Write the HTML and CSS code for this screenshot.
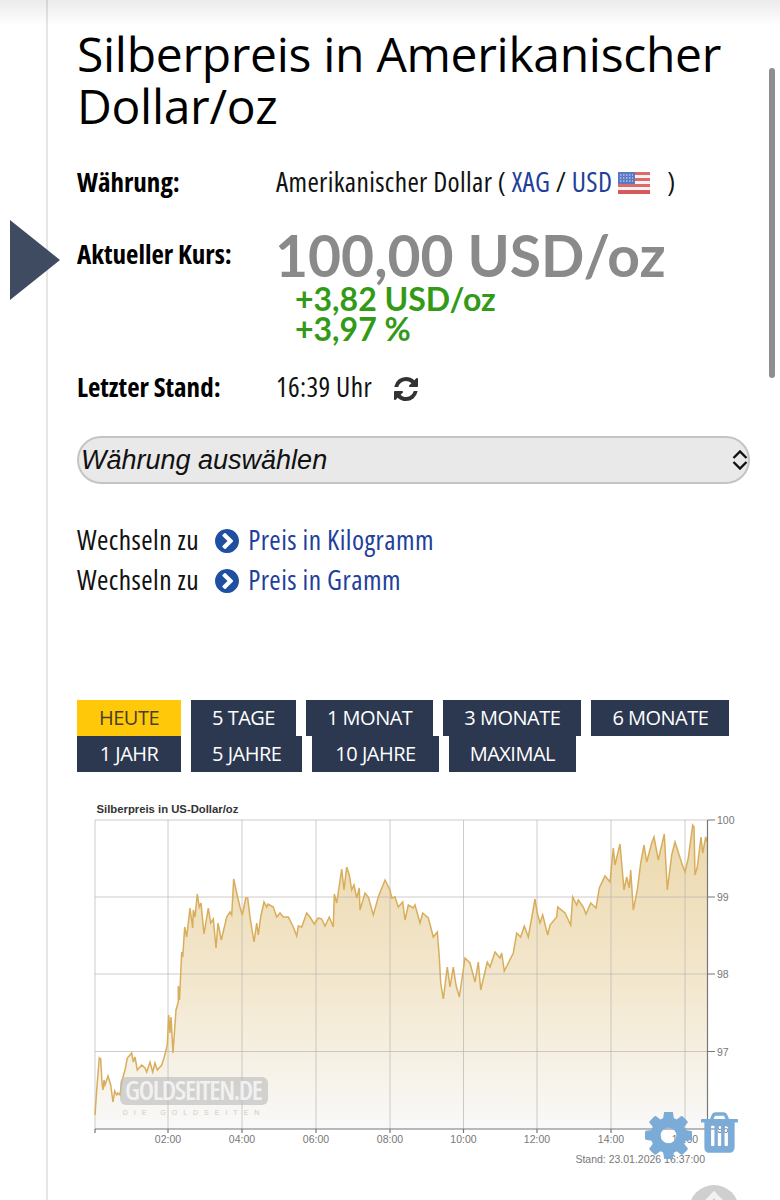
FILE: index.html
```html
<!DOCTYPE html>
<html lang="de">
  <head>
    <meta charset="utf-8">
    <title>Silberpreis in Amerikanischer Dollar/oz</title>
    <link rel="stylesheet" href="styles.css">
  </head>
  <body>
    <div class="top-shade"></div>
    <div class="scrollbar"></div>
    <div class="marker"></div>

    <div class="page">
      <h1>Silberpreis in Amerikanischer Dollar/oz</h1>

      <div class="row row-currency">
        <div class="label">Währung:</div>
        <div class="value">
          Amerikanischer Dollar ( <a href="#">XAG</a> / <a href="#">USD</a>
          <svg class="flag" viewBox="0 0 32 22">
            <rect width="32" height="22" rx="2" fill="#f4f1f1"/>
            <rect y="0" width="32" height="3" fill="#dd6a6a"/>
            <rect y="6" width="32" height="3" fill="#dd6a6a"/>
            <rect y="12" width="32" height="3" fill="#dd6a6a"/>
            <rect y="18" width="32" height="4" fill="#d65a5a"/>
            <rect width="17" height="12" fill="#5a78c4"/>
            <path d="M2 3h13M2 6h13M2 9h13" stroke="#dfe6f7" stroke-width="1.2" stroke-dasharray="1.5 1.5"/>
          </svg>
          <span class="paren">)</span>
        </div>
      </div>

      <div class="row row-price">
        <div class="label">Aktueller Kurs:</div>
        <div class="price-box">
          <div class="price">100,00 USD/oz</div>
          <div class="change">+3,82 USD/oz<br>+3,97 %</div>
        </div>
      </div>

      <div class="row row-time">
        <div class="label">Letzter Stand:</div>
        <div class="value">
          16:39 Uhr
          <svg class="refresh" viewBox="0 0 1536 1536"><path d="M1511 928q0 5-1 7-64 268-268 434.500t-478 166.500q-146 0-282.500-55t-243.500-157l-129 129q-19 19-45 19t-45-19-19-45v-448q0-26 19-45t45-19h448q26 0 45 19t19 45-19 45l-137 137q71 66 161 102t187 36q134 0 250-65t186-179q11-17 53-117 8-23 30-23h192q13 0 22.500 9.500t9.500 22.500zm25-800v448q0 26-19 45t-45 19h-448q-26 0-45-19t-19-45 19-45l138-138q-148-137-349-137-134 0-250 65t-186 179q-11 17-53 117-8 23-30 23h-199q-13 0-22.500-9.500t-9.500-22.500v-7q65-268 270-434.500t480-166.500q146 0 284 55.500t245 156.500l130-129q19-19 45-19t45 19 19 45z"/></svg>
        </div>
      </div>

      <div class="picker">
        <span>Währung auswählen</span>
        <svg class="picker-arrows" viewBox="0 0 16 20"><path d="M1.500 8L8 1.500 14.500 8M1.500 12L8 18.500 14.500 12"/></svg>
      </div>

      <div class="switch">
        <div class="switch-row">
          Wechseln zu
          <svg class="go" viewBox="0 32 1536 1536"><path d="M685 1299l454-454q19-19 19-45t-19-45L685 301q-19-19-45-19t-45 19L493 403q-19 19-19 45t19 45l307 307-307 307q-19 19-19 45t19 45l102 102q19 19 45 19t45-19zm851-499q0 209-103 385.500T1153 1465 768 1568t-385.500-103T103 1185 0 800t103-385.500T383 135 768 32t385.500 103T1433 415t103 385z"/></svg>
          <a href="#">Preis in Kilogramm</a>
        </div>
        <div class="switch-row">
          Wechseln zu
          <svg class="go" viewBox="0 32 1536 1536"><path d="M685 1299l454-454q19-19 19-45t-19-45L685 301q-19-19-45-19t-45 19L493 403q-19 19-19 45t19 45l307 307-307 307q-19 19-19 45t19 45l102 102q19 19 45 19t45-19zm851-499q0 209-103 385.500T1153 1465 768 1568t-385.500-103T103 1185 0 800t103-385.500T383 135 768 32t385.500 103T1433 415t103 385z"/></svg>
          <a href="#">Preis in Gramm</a>
        </div>
      </div>

      <div class="tabs">
        <a class="tab tab-active" href="#">HEUTE</a>
        <a class="tab" href="#">5 TAGE</a>
        <a class="tab" href="#">1 MONAT</a>
        <a class="tab" href="#">3 MONATE</a>
        <a class="tab" href="#">6 MONATE</a>
        <a class="tab" href="#">1 JAHR</a>
        <a class="tab" href="#">5 JAHRE</a>
        <a class="tab tab-wide" href="#">10 JAHRE</a>
        <a class="tab" href="#">MAXIMAL</a>
      </div>

      <div class="chart">
        <svg class="chart-svg" viewBox="77 795 673 375">
          <defs>
            <linearGradient id="area" x1="0" y1="0" x2="0" y2="1">
              <stop offset="0" stop-color="#ecd8ac"/>
              <stop offset="0.55" stop-color="#f3e8d0"/>
              <stop offset="1" stop-color="#f9f9f9"/>
            </linearGradient>
          </defs>
          <text class="chart-title" x="96.500" y="813">Silberpreis in US-Dollar/oz</text>

          <path class="area" d="M95 1129 L95 1115 96.700 1090 99.300 1058 100.700 1059 102 1083 103 1090 104 1080 105 1085 108 1076 110.700 1085 113 1102 114.700 1091 116.700 1095 118 1093 120 1095 121.700 1082 125 1070 127.300 1058 130 1055 131.700 1053 133.300 1062 135 1057 137.300 1070 141.700 1065 145 1068 146.700 1072 150 1062 152.700 1072 155 1063 157.300 1070 161.700 1065 164 1058 167.300 1045 168.700 1015 170 1033 171 1017 173 1053 176 1010 178.300 1002 178.300 986 179.500 1000 181.700 952 182.700 957 184.700 927 186.700 937 190 908 192.700 928 193.300 910 195 917 197.300 894 199.300 907 201 903 204 934 208.300 908 210.700 923 213.300 919 216 948 218 923 221.300 940 226.700 917 230 912 231.700 915 233.700 879 236.700 893 240 907 242.300 915 245.700 898 247.700 898 250 917 254 942 256.700 923 258.300 935 260.700 917 264 902 266.700 907 268 904 273.300 907 276.700 917 280 913 283.300 917 288.300 917 293.300 927 296.700 936 298.300 926 301.700 927 306.700 913 310 917 314.300 924 318.300 918 321.700 919 325 926 329.300 917 333.300 927 334.300 894 336.700 903 341.700 869 344 890 346.700 867 349.300 875 351.700 890 354 885 356.700 898 359.300 888 360 910 365 893 368.300 897 373.300 915 378.300 897 385 880 390 890 391.700 898 395 897 398.300 907 402.700 902 405 920 408.300 905 413.300 908 415 905 420 923 422.700 913 428.300 918 433.300 937 437.300 932 439.300 957 440.700 983 443.300 999 447.300 967 450 987 453.300 967 456 985 459.300 997 465 958 470 963 475 982 478.300 962 480.700 990 487.300 962 490 967 495 952 500 958 501.700 953 504.300 971 513.300 953 516.700 933 520.700 937 524.300 926 528.300 937 535 899 537.300 913 540 923 542.700 915 547.700 935 550 925 556.700 917 557.700 907 565 913 570.700 925 572.700 897 576.700 905 578.300 900 583.300 907 586 914 590.700 903 596 908 599.300 888 605 876 610 882 613.300 848 615 865 620 844 624 890 626.700 877 629.300 888 630.700 870 633.300 910 637.300 890 640.700 863 644 845 646.700 862 651.700 843 654 837 658.300 860 664.300 834 667.300 890 671.700 855 675 842 681.700 863 685 872 688.300 858 690.700 840 692.700 825 694 827 695 875 697.300 867 701 837 702.700 853 705.700 837 707.300 842 L707.300 1129 Z"/>

          <g class="grid">
            <path d="M95 820H707M95 897H707M95 974H707M95 1051.500H707"/>
            <path d="M95 820V1129M168 820V1129M242 820V1129M316 820V1129M390 820V1129M463.500 820V1129M537 820V1129M611 820V1129M685 820V1129"/>
          </g>

          <path class="line" d="M95 1115 96.700 1090 99.300 1058 100.700 1059 102 1083 103 1090 104 1080 105 1085 108 1076 110.700 1085 113 1102 114.700 1091 116.700 1095 118 1093 120 1095 121.700 1082 125 1070 127.300 1058 130 1055 131.700 1053 133.300 1062 135 1057 137.300 1070 141.700 1065 145 1068 146.700 1072 150 1062 152.700 1072 155 1063 157.300 1070 161.700 1065 164 1058 167.300 1045 168.700 1015 170 1033 171 1017 173 1053 176 1010 178.300 1002 178.300 986 179.500 1000 181.700 952 182.700 957 184.700 927 186.700 937 190 908 192.700 928 193.300 910 195 917 197.300 894 199.300 907 201 903 204 934 208.300 908 210.700 923 213.300 919 216 948 218 923 221.300 940 226.700 917 230 912 231.700 915 233.700 879 236.700 893 240 907 242.300 915 245.700 898 247.700 898 250 917 254 942 256.700 923 258.300 935 260.700 917 264 902 266.700 907 268 904 273.300 907 276.700 917 280 913 283.300 917 288.300 917 293.300 927 296.700 936 298.300 926 301.700 927 306.700 913 310 917 314.300 924 318.300 918 321.700 919 325 926 329.300 917 333.300 927 334.300 894 336.700 903 341.700 869 344 890 346.700 867 349.300 875 351.700 890 354 885 356.700 898 359.300 888 360 910 365 893 368.300 897 373.300 915 378.300 897 385 880 390 890 391.700 898 395 897 398.300 907 402.700 902 405 920 408.300 905 413.300 908 415 905 420 923 422.700 913 428.300 918 433.300 937 437.300 932 439.300 957 440.700 983 443.300 999 447.300 967 450 987 453.300 967 456 985 459.300 997 465 958 470 963 475 982 478.300 962 480.700 990 487.300 962 490 967 495 952 500 958 501.700 953 504.300 971 513.300 953 516.700 933 520.700 937 524.300 926 528.300 937 535 899 537.300 913 540 923 542.700 915 547.700 935 550 925 556.700 917 557.700 907 565 913 570.700 925 572.700 897 576.700 905 578.300 900 583.300 907 586 914 590.700 903 596 908 599.300 888 605 876 610 882 613.300 848 615 865 620 844 624 890 626.700 877 629.300 888 630.700 870 633.300 910 637.300 890 640.700 863 644 845 646.700 862 651.700 843 654 837 658.300 860 664.300 834 667.300 890 671.700 855 675 842 681.700 863 685 872 688.300 858 690.700 840 692.700 825 694 827 695 875 697.300 867 701 837 702.700 853 705.700 837 707.300 842"/>

          <g class="axis">
            <path d="M707.500 820V1129M95 1129H707.500"/>
            <path d="M707.500 820H715M707.500 897H715M707.500 974H715M707.500 1051.500H715M707.500 1129H715"/>
            <path d="M95 1129V1133M168 1129V1133M242 1129V1133M316 1129V1133M390 1129V1133M463.500 1129V1133M537 1129V1133M611 1129V1133M685 1129V1133"/>
          </g>
          <g class="tick-labels">
            <text x="717" y="824">100</text>
            <text x="717" y="901">99</text>
            <text x="717" y="978">98</text>
            <text x="717" y="1056">97</text>
            <text x="717" y="1133">96</text>
          </g>
          <g class="tick-labels tick-center">
            <text x="168" y="1143">02:00</text>
            <text x="242" y="1143">04:00</text>
            <text x="316" y="1143">06:00</text>
            <text x="390" y="1143">08:00</text>
            <text x="463.500" y="1143">10:00</text>
            <text x="537" y="1143">12:00</text>
            <text x="611" y="1143">14:00</text>
            <text x="685" y="1143">16:00</text>
          </g>
          <text class="stand" x="705" y="1163">Stand: 23.01.2026 16:37:00</text>

          <rect class="mark-box" x="120" y="1077" width="148" height="28" rx="6"/>
          <text class="mark-name" x="125" y="1100" textLength="138">GOLDSEITEN.DE</text>
          <text class="mark-sub" x="194" y="1115">DIE GOLDSEITEN</text>
        </svg>

        <svg class="chart-tool tool-gear" viewBox="0 0 1536 1536"><path d="M1024 768q0-106-75-181t-181-75-181 75-75 181 75 181 181 75 181-75 75-181zm512-109v222q0 12-8 23t-20 13l-185 28q-19 54-39 91 35 50 107 138 10 12 10 25t-9 23q-27 37-99 108t-94 71q-12 0-26-9l-138-108q-44 23-91 38-16 136-29 186-7 28-36 28H658q-14 0-24.500-8.500T622 1506l-28-184q-49-16-90-37l-141 107q-10 9-25 9-14 0-25-11-126-114-165-168-7-10-7-23 0-12 8-23 15-21 51-66.500t54-70.500q-27-50-41-99L30 907q-13-2-21-12.500T1 871V649q0-12 8-23t19-13l186-28q14-46 39-92-40-57-107-138-10-12-10-24 0-10 9-23 26-36 98.500-107.500T338 129q13 0 26 10l138 107q44-23 91-38 16-136 29-186 7-28 36-28h222q14 0 24.500 8.500T916 24l28 184q49 16 90 37l142-107q9-9 24-9 13 0 25 10 129 119 165 170 7 8 7 22 0 12-8 23-15 21-51 66.500t-54 70.500q26 50 41 98l183 28q13 2 21 12.500t8 23.500z"/></svg>
        <svg class="chart-tool tool-trash" viewBox="0 0 1408 1536"><path d="M512 1248V544q0-14-9-23t-23-9h-64q-14 0-23 9t-9 23v704q0 14 9 23t23 9h64q14 0 23-9t9-23zm256 0V544q0-14-9-23t-23-9h-64q-14 0-23 9t-9 23v704q0 14 9 23t23 9h64q14 0 23-9t9-23zm256 0V544q0-14-9-23t-23-9h-64q-14 0-23 9t-9 23v704q0 14 9 23t23 9h64q14 0 23-9t9-23zM480 256h448l-48-117q-7-9-17-11H546q-10 2-17 11zm928 32v64q0 14-9 23t-23 9h-96v948q0 83-47 143.500t-113 60.500H288q-66 0-113-58.500T128 1336V384H32q-14 0-23-9t-9-23v-64q0-14 9-23t23-9h309l70-167q15-37 54-63t79-26h320q40 0 79 26t54 63l70 167h309q14 0 23 9t9 23z"/></svg>
      </div>
    </div>

    <div class="to-top"></div>
  </body>
</html>
```

FILE: styles.css
```css
html, body {
  margin: 0;
  height: 1200px;
  overflow: hidden;
  background-color: #fff;
  color: #111;
}
body {
  position: relative;
  font-family: "Open Sans", "Liberation Sans", sans-serif;
  font-stretch: 75%;
}
a {
  color: #1f419b;
  text-decoration: none;
}

.top-shade {
  position: absolute;
  left: 0;
  right: 0;
  top: 0;
  height: 26px;
  background: linear-gradient(rgba(0, 0, 0, 0.08), rgba(0, 0, 0, 0));
}
.scrollbar {
  position: absolute;
  left: 769px;
  top: 68px;
  width: 6px;
  height: 310px;
  border-radius: 3px;
  background-color: #8e8e8e;
}
.marker {
  position: absolute;
  left: 10px;
  top: 220px;
  width: 0;
  height: 0;
  border-style: solid;
  border-width: 40px 0 40px 50px;
  border-color: transparent transparent transparent #3f4b60;
}
.to-top {
  position: absolute;
  left: 689px;
  top: 1185px;
  width: 50px;
  height: 50px;
  border-radius: 25px;
  background-color: #cfcfcf;
}
.to-top::after {
  content: "";
  position: absolute;
  left: 18px;
  top: 9px;
  width: 14px;
  height: 14px;
  box-sizing: border-box;
  border-top: 5px solid #f2f2f2;
  border-left: 5px solid #f2f2f2;
  transform: rotate(45deg);
}

.page {
  margin-left: 46px;
  height: 1200px;
  border-left: 2px solid #e6e6e6;
  padding: 28px 30px 0 29px;
  box-sizing: border-box;
}

h1 {
  margin: 0 0 32px 0;
  font-weight: normal;
  font-size: 48px;
  font-stretch: 100%;
  letter-spacing: -0.300px;
  line-height: 52px;
  color: #000;
}

.row {
  display: flex;
  font-size: 27.500px;
}
.label {
  width: 199px;
  flex: none;
  font-size: 27px;
  font-weight: bold;
  color: #000;
}
.value {
  letter-spacing: 0.350px;
}
.row-currency {
  line-height: 36px;
  height: 36px;
}
.flag {
  width: 32px;
  height: 22px;
  vertical-align: -2px;
}
.paren {
  margin-left: 12px;
}
.row-price {
  margin-top: 33px;
}
.row-price .label {
  padding-top: 2px;
}
.price-box {
  font-family: Lato, "Liberation Sans", sans-serif;
  font-weight: bold;
}
.price {
  font-size: 57px;
  line-height: 54px;
  color: #8a8a8a;
  margin: -5px 0 2px -1px;
}
.change {
  font-size: 32px;
  line-height: 30px;
  color: #339a18;
  margin-left: 19px;
}
.row-time {
  margin-top: 25px;
  line-height: 36px;
}
.refresh {
  width: 24px;
  height: 24px;
  fill: #333;
  margin-left: 16px;
  vertical-align: -4px;
}

.picker {
  margin-top: 31px;
  height: 48px;
  box-sizing: border-box;
  border: 2px solid #c4c4c4;
  border-radius: 24px;
  background-color: #e9e9e9;
  display: flex;
  align-items: center;
  justify-content: space-between;
  padding: 0 0 0 2px;
  font-family: "Liberation Sans", sans-serif;
  font-style: italic;
  font-size: 27px;
  color: #111;
}
.picker-arrows {
  width: 16px;
  height: 20px;
  fill: none;
  stroke: #111;
  stroke-width: 2.400;
}

.switch {
  margin-top: 36px;
  font-size: 27.500px;
  letter-spacing: 0.450px;
  line-height: 40px;
}
.go {
  width: 24px;
  height: 24px;
  fill: #1f4fa0;
  margin: 0 4px 0 10px;
  vertical-align: -3px;
}

.tabs {
  margin-top: 100px;
  display: flex;
  flex-wrap: wrap;
  column-gap: 10px;
  width: 673px;
}
.tab {
  height: 36px;
  line-height: 36px;
  min-width: 104px;
  box-sizing: border-box;
  text-align: center;
  padding: 0 21px;
  font-size: 20px;
  font-stretch: 100%;
  letter-spacing: -0.500px;
  color: #fff;
  background-color: #2b3850;
}
.tab-active {
  background-color: #ffc90a;
  color: #46402a;
}
.tab-wide {
  padding: 0 23px;
}

.chart {
  position: relative;
  margin-top: 23px;
}
.chart-svg {
  display: block;
  width: 673px;
  height: 375px;
  font-family: "Liberation Sans", sans-serif;
}
.chart-title {
  font-size: 11.300px;
  font-weight: bold;
  fill: #333;
}
.area {
  fill: url(#area);
}
.grid path {
  fill: none;
  stroke: #b9b6b0;
  stroke-opacity: 0.7;
  stroke-width: 1;
}
.line {
  fill: none;
  stroke: #d8ae5c;
  stroke-width: 1.500;
}
.axis path {
  fill: none;
  stroke: #777;
  stroke-width: 1.200;
}
.tick-labels {
  font-size: 10.500px;
  fill: #777;
}
.tick-center {
  text-anchor: middle;
}
.stand {
  font-size: 10.500px;
  fill: #777;
  text-anchor: end;
}
.mark-box {
  fill: #b9b9b9;
  fill-opacity: 0.6;
}
.mark-name {
  font-size: 27px;
  font-family: "Open Sans", sans-serif;
  font-stretch: 75%;
  font-weight: 600;
  fill: #f1f1f1;
}
.mark-sub {
  font-size: 7px;
  letter-spacing: 6px;
  fill: #ccc;
  text-anchor: middle;
}

.chart-tool {
  position: absolute;
  fill: #7bacd8;
}
.tool-gear {
  left: 568px;
  top: 317px;
  width: 47px;
  height: 47px;
}
.tool-trash {
  left: 624px;
  top: 317px;
  width: 37px;
  height: 41px;
}
```
